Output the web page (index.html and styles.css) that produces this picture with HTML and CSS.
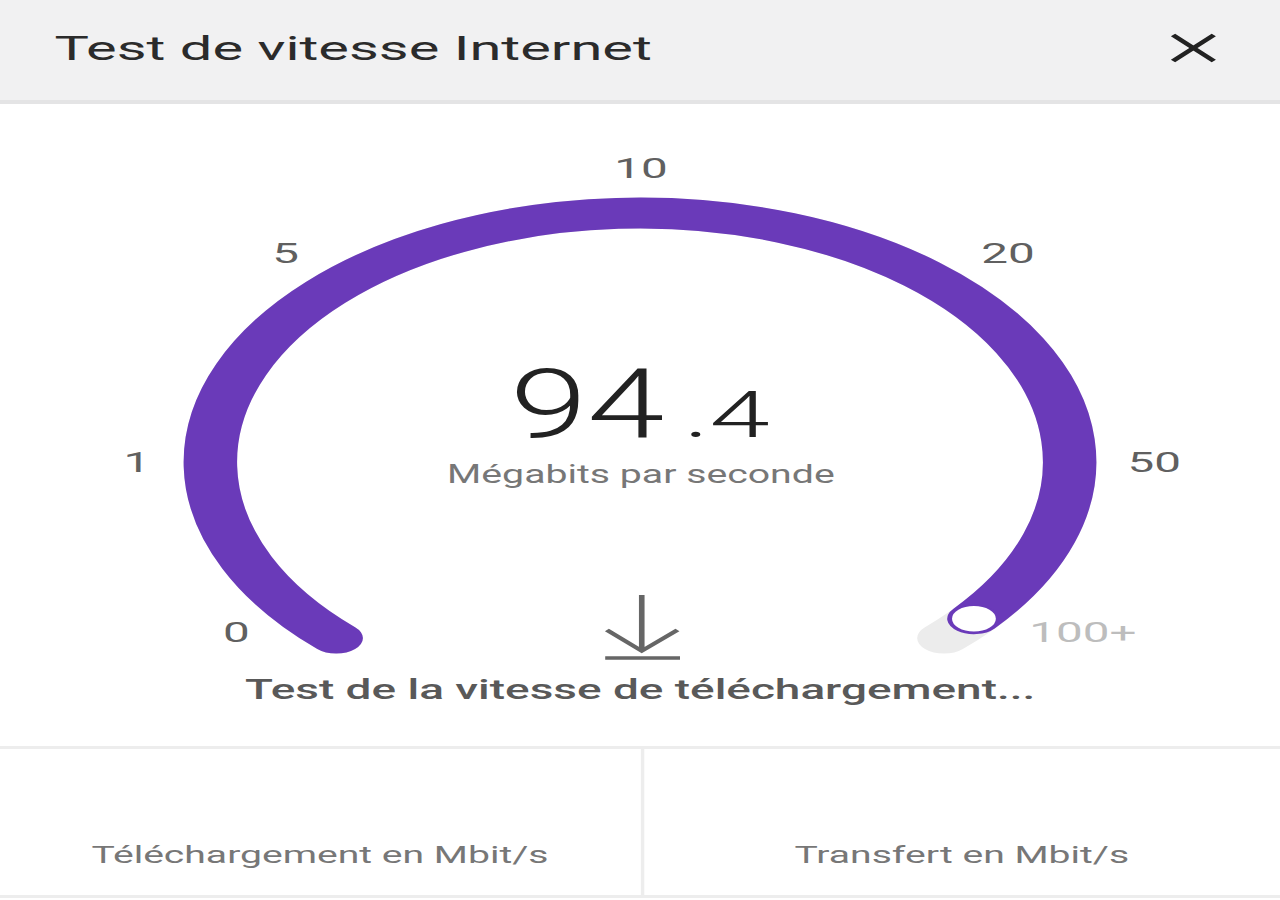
FILE: index.html
```html
<!DOCTYPE html>
<html lang="fr">
<head>
<meta charset="utf-8">
<title>Test de vitesse Internet</title>
<link rel="stylesheet" href="styles.css">
</head>
<body>
<div class="app">
  <header class="topbar">
    <h1 class="title">Test de vitesse Internet</h1>
    <button class="close" aria-label="Fermer">
      <svg viewBox="0 0 28 30" width="28" height="30">
        <path d="M2 2 L26 28 M26 2 L2 28" fill="none" stroke="#222" stroke-width="3.4" stroke-linecap="butt"/>
      </svg>
    </button>
  </header>

  <section class="meter">
    <svg class="gauge" viewBox="0 104 753 561" width="753" height="561">
      <g transform="translate(376.5 462) scale(1.015 1)">
        <!-- full track -->
        <path d="M -176.1 176.1 A 249 249 0 1 1 176.1 176.1" fill="none" stroke="#ececec" stroke-width="31" stroke-linecap="round"/>
        <!-- measured part -->
        <path d="M -176.1 176.1 A 249 249 0 1 1 193.5 156.7" fill="none" stroke="#6a3ab9" stroke-width="31" stroke-linecap="round"/>
        <!-- needle knob -->
        <circle cx="193.5" cy="156.7" r="13.5" fill="#fff" stroke="#6a3ab9" stroke-width="1.6"/>
      </g>

      <g class="scale-labels">
        <text x="377" y="178">10</text>
        <text x="168" y="263">5</text>
        <text x="593" y="263">20</text>
        <text x="80.5" y="472">1</text>
        <text x="679" y="472">50</text>
        <text x="139" y="642">0</text>
        <text x="637" y="642" class="muted">100+</text>
      </g>

      <text class="speed" transform="translate(300 437) scale(0.853 1)">94</text>
      <text class="speed-dec" x="402" y="437">.4</text>
      <text class="unit" x="377" y="483" textLength="228" lengthAdjust="spacingAndGlyphs">Mégabits par seconde</text>

      <!-- download icon -->
      <path d="M377.5 595 V650 M357 630 L377.5 651 L398.5 630 M356 658 H400" fill="none" stroke="#666" stroke-width="3.3"/>
    </svg>
    <p class="caption">Test de la vitesse de téléchargement...</p>
  </section>

  <section class="stats">
    <div class="stat">
      <span class="stat-label">Téléchargement en Mbit/s</span>
    </div>
    <div class="stat">
      <span class="stat-label">Transfert en Mbit/s</span>
    </div>
  </section>
</div>
</body>
</html>
```

FILE: styles.css
```css
html, body {
  margin: 0;
  padding: 0;
  background: #ffffff;
  overflow: hidden;
}

body {
  width: 1280px;
  height: 900px;
  font-family: Roboto, "Noto Sans", "Liberation Sans", sans-serif;
}

/* the phone layout is 753px wide and widened to fill the window */
.app {
  width: 753px;
  transform: scaleX(1.7);
  transform-origin: 0 0;
}

.topbar {
  height: 96px;
  padding: 0 37px 4px 32px;
  background: #f1f1f2;
  border-bottom: 4px solid #e4e4e5;
  display: flex;
  align-items: center;
  justify-content: space-between;
}

.title {
  margin: 0;
  font-size: 34px;
  font-weight: 400;
  color: #2b2b2b;
  line-height: 40px;
}

.close {
  border: 0;
  padding: 0;
  background: none;
  display: flex;
}

.meter {
  padding-bottom: 38px;
}

.gauge {
  display: block;
}

.scale-labels text {
  font-family: Roboto, "Liberation Sans", sans-serif;
  font-size: 28px;
  fill: #606060;
  text-anchor: middle;
}

.scale-labels .muted {
  fill: #bdbdbd;
}

.speed {
  font-family: Roboto, sans-serif;
  font-weight: 300;
  font-size: 96px;
  fill: #222;
}

.speed-dec {
  font-family: Roboto, sans-serif;
  font-weight: 300;
  font-size: 64px;
  fill: #222;
}

.unit {
  font-family: Roboto, sans-serif;
  font-size: 25px;
  fill: #777;
  text-anchor: middle;
}

.caption {
  margin: 0;
  padding-top: 7px;
  font-size: 27px;
  line-height: 36px;
  font-weight: 500;
  color: #595959;
  text-align: center;
}

.stats {
  display: grid;
  grid-template-columns: 1fr 1fr;
  border-top: 3px solid #ededed;
  border-bottom: 3px solid #ededed;
}

.stat {
  height: 146px;
  box-sizing: border-box;
  padding-top: 92px;
  text-align: center;
}

.stat + .stat {
  border-left: 2px solid #ededed;
}

.stat-label {
  font-size: 23px;
  line-height: 30px;
  color: #777;
}
```
